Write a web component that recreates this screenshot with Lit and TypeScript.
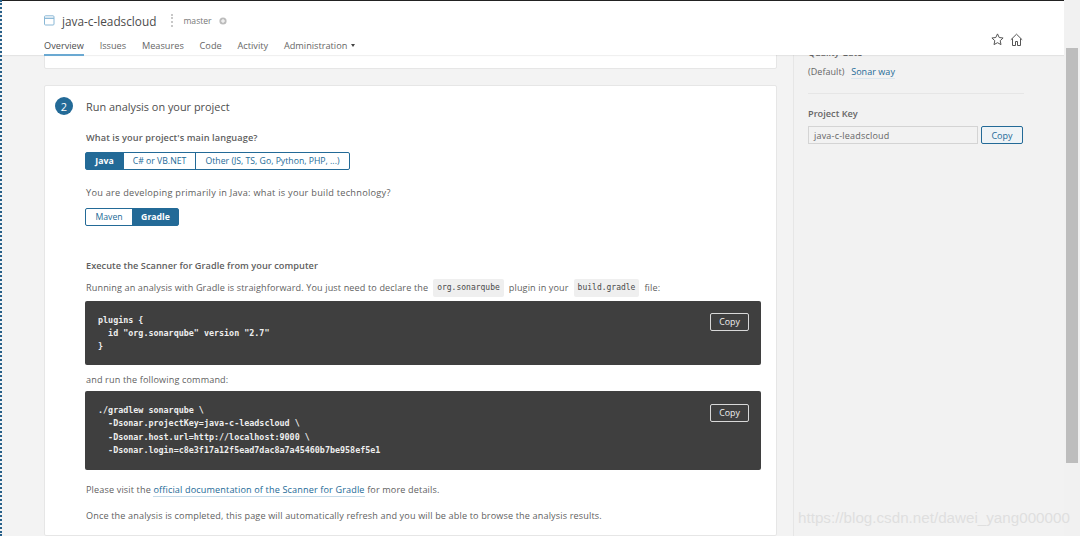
import { LitElement, html, css } from "lit";
import { customElement } from "lit/decorators.js";

@customElement("app-root")
export class AppRoot extends LitElement {
  static styles = css`
    :host { display: block; width: 1080px; height: 536px; overflow: hidden; background: #f3f3f3; font-family: "Open Sans", "Noto Sans", sans-serif; color: #4e4e4e; font-size: 9.3px; }
    * { box-sizing: border-box; }
    .shell { position: relative; display: flex; height: 536px; }
    .page { position: relative; width: 1064px; height: 536px; border-left: 2px dotted #27608a; display: flex; overflow: hidden; }
    .track { width: 16px; padding: 48px 2px 0; background: #f1f1f1; }
    .thumb { height: 415px; background: #bdbdbd; }

    .header { position: absolute; z-index: 2; left: 0; top: 0; right: 0; height: 55px; background: #fff; border-top: 1px solid #222; padding: 12px 0 0 42px; box-shadow: 0 1px 1px rgba(0,0,0,.06); }
    .title { display: flex; align-items: center; height: 15px; }
    .title svg { display: block; }
    .name { margin-left: 7px; font-size: 11.8px; color: #4b4b4b; }
    .sep { margin: 0 9px 0 15px; width: 3px; height: 13px; border-left: 2px dotted #c8c8c8; }
    .branch { font-size: 8.6px; color: #777; }
    .plus { margin-left: 7px; display: block; }
    .tabs { display: flex; gap: 15.8px; margin-top: 11px; font-size: 9.2px; color: #666; }
    .tab { height: 17px; line-height: 13px; }
    .tab.on { color: #4e4e4e; border-bottom: 2px solid #6aa9d2; }
    .caret { display: inline-block; margin-left: 4px; border: 2.5px solid transparent; border-top: 3px solid #444; border-bottom: 0; vertical-align: 2px; }
    .actions { position: absolute; right: 41px; top: 32px; display: flex; gap: 6px; }

    .main { width: 791px; padding-left: 42px; flex: none; }
    .stub { height: 69px; width: 733px; background: #fff; border: 1px solid #e6e6e6; border-radius: 2px; }
    .card { margin-top: 16px; width: 733px; height: 451px; background: #fff; border: 1px solid #e6e6e6; border-radius: 2px; padding: 11px 16px 0 10px; }
    .step { display: flex; align-items: center; gap: 13px; height: 18px; font-size: 10.9px; color: #4e4e4e; }
    .num { width: 18px; height: 18px; border-radius: 50%; background: #236a97; color: #fff; font-size: 11px; display: flex; align-items: center; justify-content: center; }
    .body { padding-left: 30px; }
    .q { font-weight: 600; font-size: 9.2px; color: #606060; line-height: 14px; padding-left: 1px; letter-spacing: .1px; }
    .q.a { margin-top: 16px; }
    .q.b { margin-top: 16px; font-weight: 400; letter-spacing: .26px; }
    .seg { display: inline-flex; height: 18px; margin-top: 7px; border: 1px solid #236a97; border-radius: 2px; font-size: 8.7px; color: #236a97; vertical-align: top; }
    .seg.m { margin-top: 8px; }
    .segwrap { display: flex; }
    .seg span { display: flex; align-items: center; justify-content: center; border-left: 1px solid #236a97; }
    .seg span:first-child { border-left: 0; }
    .seg span.on { background: #236a97; color: #fff; font-weight: 700; }
    .scan { margin-top: 33px; font-weight: 600; font-size: 9.2px; line-height: 14px; color: #606060; padding-left: 1px; letter-spacing: .04px; }
    .p { font-size: 9.1px; line-height: 14px; color: #5f5f5f; letter-spacing: .14px; padding-left: 1px; }
    .p.run { margin-top: 7px; height: 16px; display: flex; align-items: center; white-space: pre; letter-spacing: .12px; }
    code { font-family: "DejaVu Sans Mono", monospace; font-size: 8px; letter-spacing: 0; background: #efefef; padding: 2px 4px; margin: 0 2.5px; border-radius: 2px; color: #4a4a4a; }
    .code { position: relative; margin-top: 5px; width: 676px; background: #3f3f3f; border-radius: 2px; padding: 13px 13px; color: #eee; }
    pre { margin: 0; font-family: "DejaVu Sans Mono", monospace; font-size: 8.38px; font-weight: 700; line-height: 13px; }
    .c1 { height: 64px; }
    .c2 { height: 79px; margin-top: 4px; }
    .c2 pre { line-height: 13.4px; }
    .copy { position: absolute; top: 12px; right: 12px; width: 39px; height: 18px; border: 1px solid #d8d8d8; border-radius: 2px; color: #f0f0f0; font-size: 8.8px; display: flex; align-items: center; justify-content: center; }
    .c2 .copy { top: 13px; }
    .and { margin-top: 8px; }
    .visit { margin-top: 13px; }
    .done { margin-top: 12px; }
    a { color: #236a97; border-bottom: 1px solid #c6dbe9; }

    .side { width: 271px; flex: none; border-left: 1px solid #e6e6e6; padding: 46px 0 0 14px; background: #f2f2f2; }
    .qg { font-size: 9px; font-weight: 600; color: #666; line-height: 14px; }
    .def { margin-top: 5px; font-size: 9px; color: #666; line-height: 14px; letter-spacing: .05px; }
    .def a { margin-left: 2px; border-bottom-color: #dbe7ef; }
    .hr { width: 216px; height: 1px; background: #e6e6e6; margin-top: 14px; }
    .pk { margin-top: 13px; font-weight: 600; font-size: 9.2px; line-height: 14px; color: #666; }
    .keyrow { display: flex; gap: 3px; margin-top: 5px; }
    .input { width: 170px; height: 18px; border: 1px solid #d4d4d4; background: #f2f2f2; padding-left: 5px; font-size: 9px; display: flex; align-items: center; color: #666; letter-spacing: .2px; }
    .btn { width: 42px; height: 18px; border: 1px solid #236a97; border-radius: 2px; background: #eef3f6; color: #236a97; font-size: 9px; display: flex; align-items: center; justify-content: center; }
    .wm { position: absolute; left: 798px; top: 509px; font-family: "Liberation Sans", sans-serif; font-size: 15.2px; line-height: 18px; color: #dfdfdf; white-space: nowrap; }
  `;

  render() {
    return html`<div class="shell">
      <div class="page">
        <div class="header">
          <div class="title">
            <svg width="11" height="11" viewBox="0 0 11 11" fill="none" stroke="#8ab8d6" stroke-width="1"><rect x=".5" y=".8" width="9.500" height="9.200" rx="1"/><path d="M.5 3.300h9.500" stroke-width="1.300"/></svg>
            <span class="name">java-c-leadscloud</span>
            <span class="sep"></span>
            <span class="branch">master</span>
            <svg class="plus" width="8" height="8" viewBox="0 0 8 8"><circle cx="4" cy="4" r="3.600" fill="#bcbcbc"/><path d="M4 2v4M2 4h4" stroke="#fff" stroke-width="1"/></svg>
          </div>
          <div class="tabs">
            <span class="tab on">Overview</span><span class="tab">Issues</span><span class="tab">Measures</span><span class="tab">Code</span><span class="tab">Activity</span><span class="tab">Administration<i class="caret"></i></span>
          </div>
          <div class="actions">
            <svg width="13" height="13" viewBox="0 0 13 13" fill="none" stroke="#555" stroke-width="1"><path d="M6.500 .9l1.700 3.600 3.900.5-2.900 2.700.8 3.900-3.500-1.900-3.500 1.900.8-3.900L.9 5l3.900-.5z"/></svg>
            <svg width="13" height="13" viewBox="0 0 13 13" fill="none" stroke="#555" stroke-width="1"><path d="M.8 6.800L6.500 1.200l5.700 5.600M2.500 5.500v7h3V8.500h2v4h3v-7"/></svg>
          </div>
        </div>
        <div class="main">
          <div class="stub"></div>
          <div class="card">
            <div class="step"><span class="num">2</span><span>Run analysis on your project</span></div>
            <div class="body">
              <div class="q a">What is your project's main language?</div>
              <div class="segwrap"><div class="seg"><span class="on" style="width:37px">Java</span><span style="width:72px">C# or VB.NET</span><span style="width:154px">Other (JS, TS, Go, Python, PHP, ...)</span></div></div>
              <div class="q b">You are developing primarily in Java: what is your build technology?</div>
              <div class="segwrap"><div class="seg m"><span style="width:46px">Maven</span><span class="on" style="width:46px">Gradle</span></div></div>
              <div class="scan">Execute the Scanner for Gradle from your computer</div>
              <div class="p run">Running an analysis with Gradle is straighforward. You just need to declare the <code>org.sonarqube</code> plugin in your <code>build.gradle</code> file:</div>
              <div class="code c1"><pre>plugins {
  id "org.sonarqube" version "2.7"
}</pre><span class="copy">Copy</span></div>
              <div class="p and">and run the following command:</div>
              <div class="code c2"><pre>./gradlew sonarqube \\
  -Dsonar.projectKey=java-c-leadscloud \\
  -Dsonar.host.url=http://localhost:9000 \\
  -Dsonar.login=c8e3f17a12f5ead7dac8a7a45460b7be958ef5e1</pre><span class="copy">Copy</span></div>
              <div class="p visit">Please visit the <a>official documentation of the Scanner for Gradle</a> for more details.</div>
              <div class="p done">Once the analysis is completed, this page will automatically refresh and you will be able to browse the analysis results.</div>
            </div>
          </div>
        </div>
        <div class="side">
          <div class="qg">Quality Gate</div>
          <div class="def">(Default)&nbsp; <a>Sonar way</a></div>
          <div class="hr"></div>
          <div class="pk">Project Key</div>
          <div class="keyrow"><div class="input">java-c-leadscloud</div><div class="btn">Copy</div></div>
        </div>
      </div>
      <div class="track"><div class="thumb"></div></div>
      <div class="wm">https://blog.csdn.net/dawei_yang000000</div>
    </div>`;
  }
}
